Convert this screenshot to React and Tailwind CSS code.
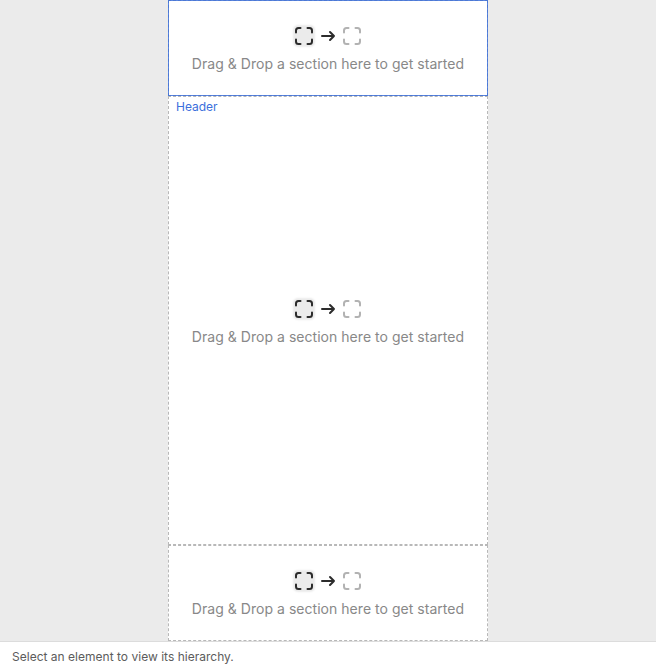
function Corners({ className }) {
  return (
    <svg className={className} width="20" height="20" viewBox="0 0 20 20" fill="none" stroke="currentColor" strokeWidth="2" strokeLinecap="round" strokeLinejoin="round">
      <path d="M2 6.5v-2A2.500 2.500 0 0 1 4.500 2h2M13.500 2h2a2.500 2.500 0 0 1 2.500 2.500v2M18 13.500v2a2.500 2.500 0 0 1-2.500 2.500h-2M6.500 18h-2a2.500 2.500 0 0 1-2.500-2.500v-2" />
    </svg>
  );
}

function Arrow() {
  return (
    <svg className="text-[#2c2c2c]" width="16" height="16" viewBox="0 0 16 16" fill="none" stroke="currentColor" strokeWidth="2" strokeLinecap="round" strokeLinejoin="round">
      <path d="M2 8h12M10 4l4 4-4 4" />
    </svg>
  );
}

function Placeholder() {
  return (
    <div className="flex flex-col items-center gap-2 pt-1">
      <div className="flex h-5 items-center gap-1.5">
        <span className="rounded bg-[#ebebeb] text-[#2c2c2c] shadow-[0_0_2px_1px_#ebebeb]">
          <Corners />
        </span>
        <Arrow />
        <Corners className="text-[#b2b2b2]" />
      </div>
      <p className="text-sm leading-5 tracking-[0.035px] whitespace-nowrap text-[#888888]">
        Drag &amp; Drop a section here to get started
      </p>
    </div>
  );
}

export default function App() {
  return (
    <div className="flex h-screen flex-col overflow-hidden bg-[#ebebeb] font-['Inter',sans-serif]">
      <main className="mx-auto flex w-80 min-h-0 flex-1 flex-col bg-white">
        <section className="relative flex h-24 shrink-0 items-center justify-center border border-dashed border-[#b8b8b8]">
          <Placeholder />
          <div className="pointer-events-none absolute -inset-px border border-[#2f66d8] opacity-80" />
        </section>
        <section className="relative flex min-h-0 flex-1 items-center justify-center border border-dashed border-[#b8b8b8]">
          <span className="absolute top-0.5 left-[7px] text-xs leading-4 text-[#3b6fdc]">Header</span>
          <Placeholder />
        </section>
        <section className="flex h-24 shrink-0 items-center justify-center border border-dashed border-[#b8b8b8]">
          <Placeholder />
        </section>
      </main>
      <footer className="flex h-[31px] shrink-0 items-center border-t border-[#dcdcdc] bg-white px-3 text-xs leading-4 tracking-[0.015px] text-[#5c5c5c]">
        Select an element to view its hierarchy.
      </footer>
    </div>
  );
}
